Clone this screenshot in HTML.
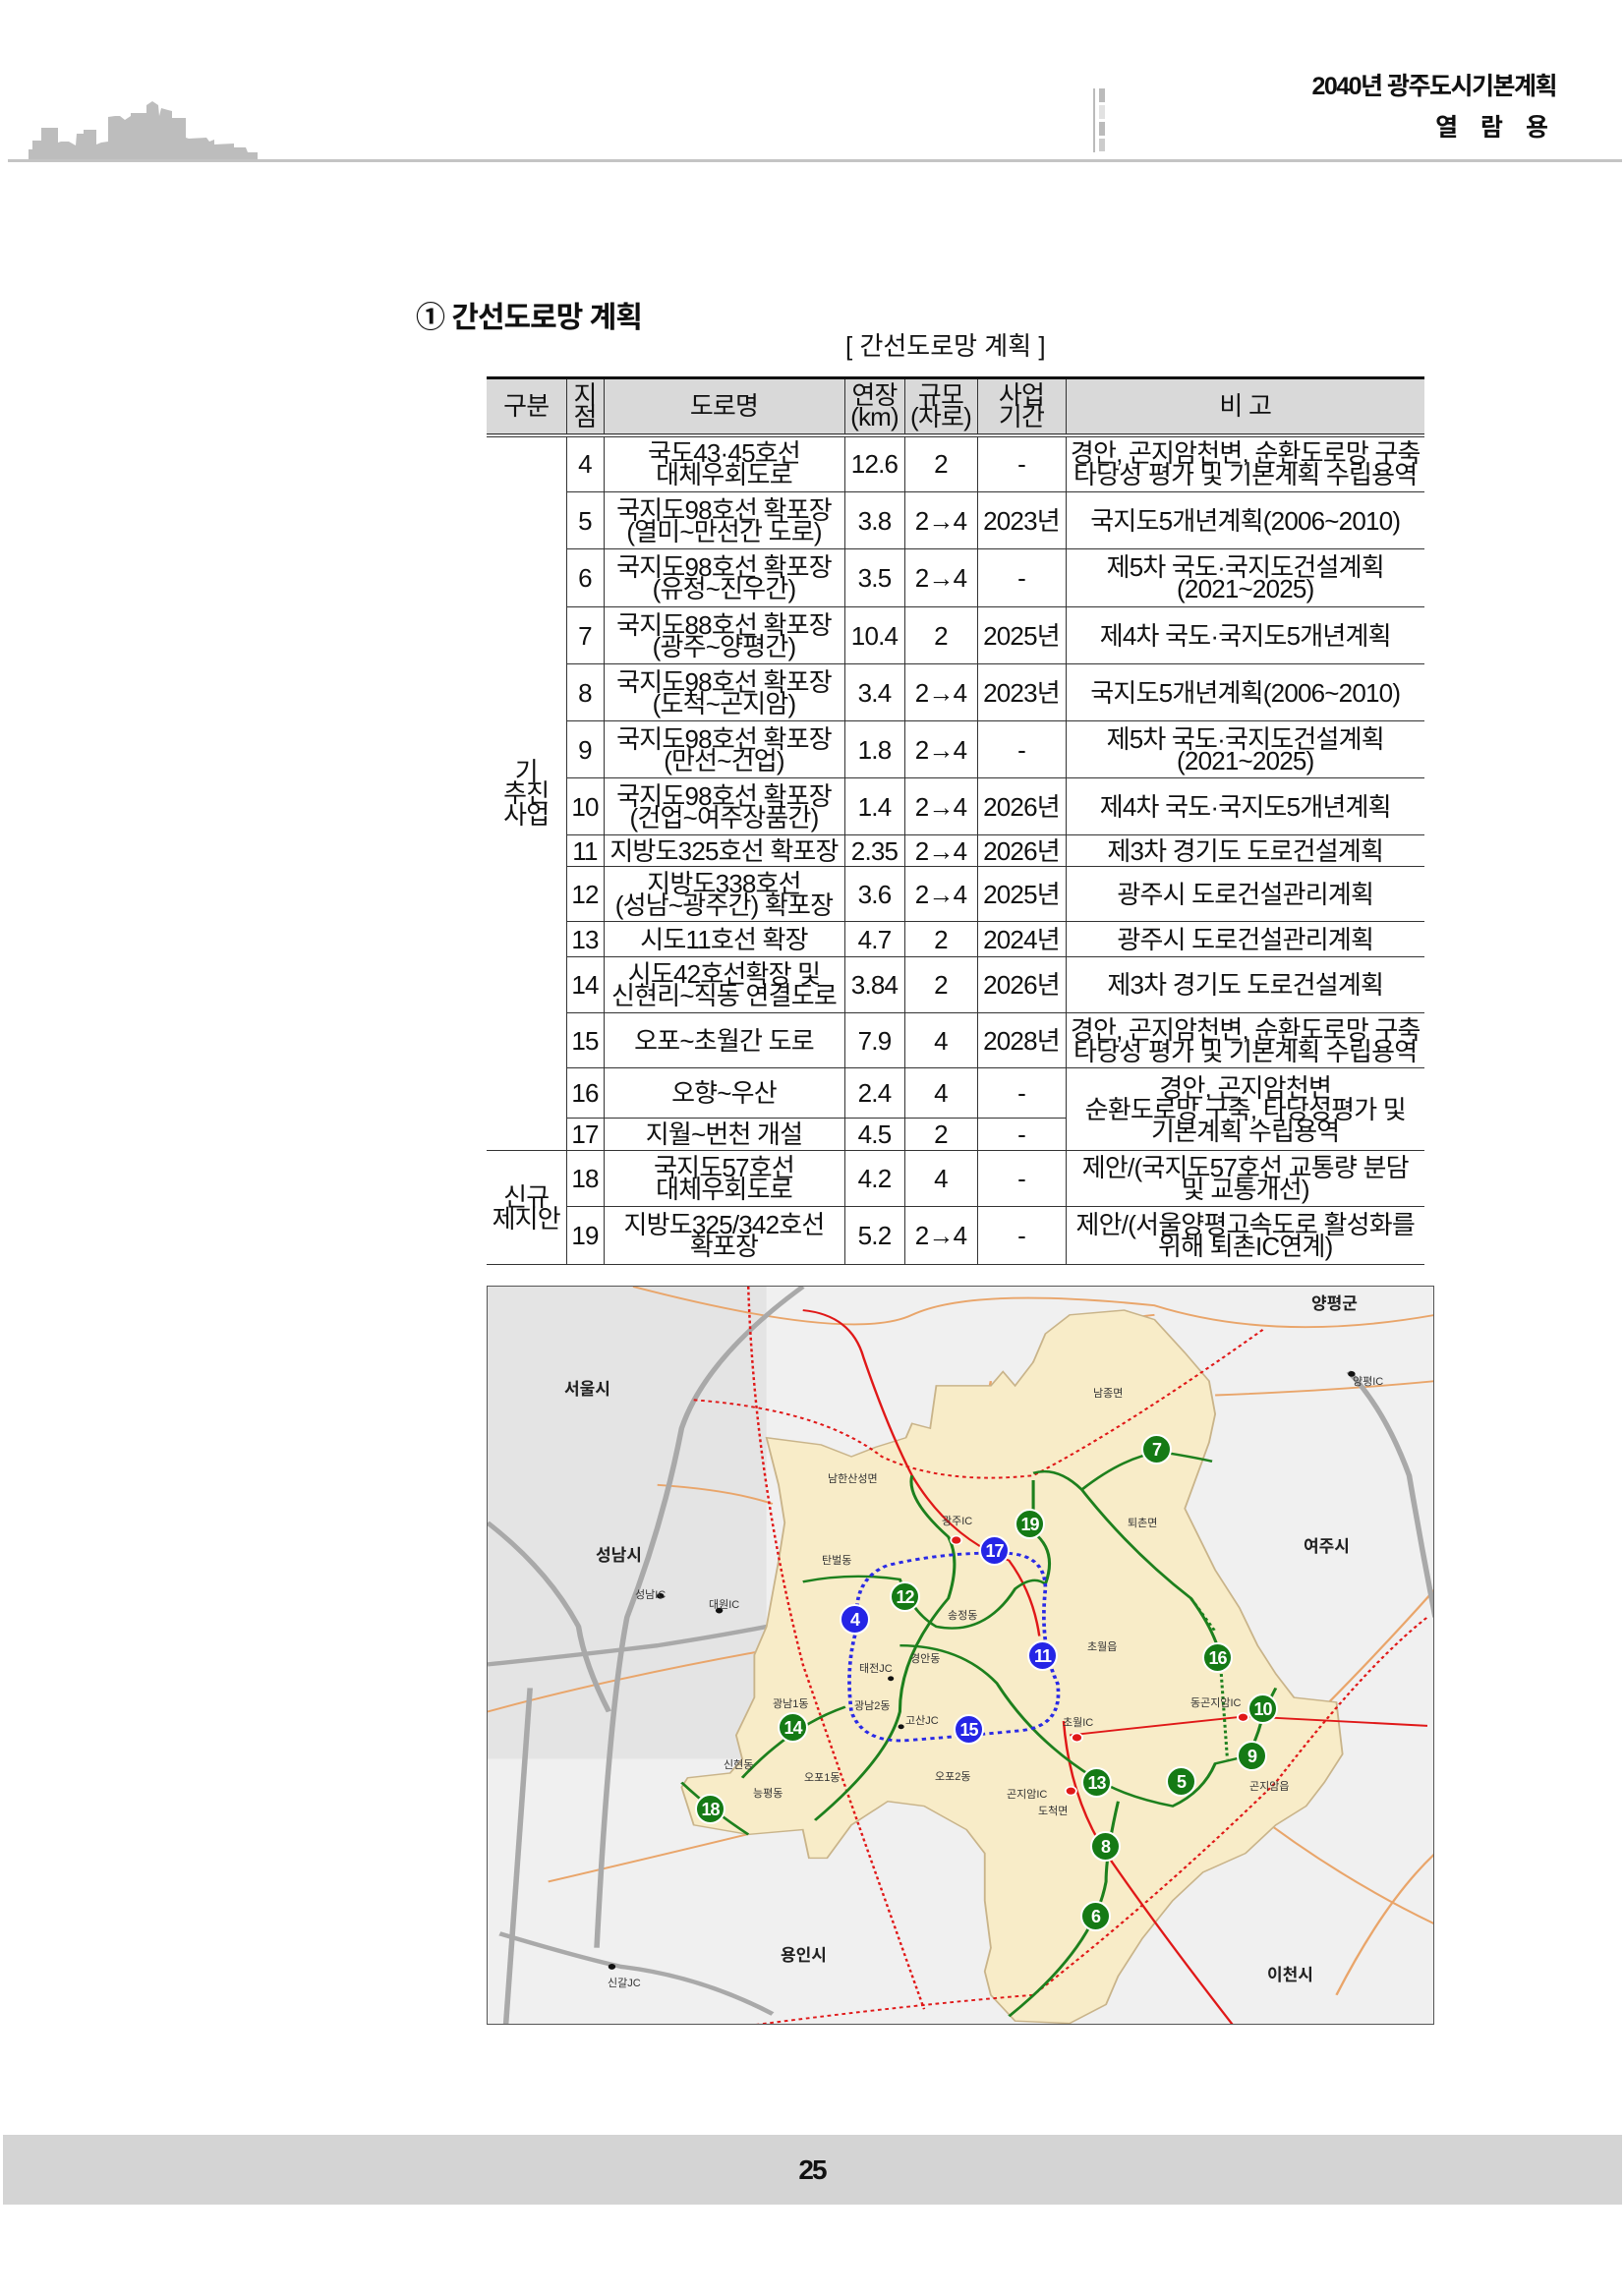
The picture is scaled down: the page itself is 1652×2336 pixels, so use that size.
<!DOCTYPE html>
<html><head><meta charset="utf-8">
<style>
*{margin:0;padding:0;box-sizing:border-box}
body{width:1652px;height:2336px;position:relative;background:#fff;font-family:"Liberation Sans","Noto Sans CJK KR",sans-serif;color:#111;overflow:hidden}
.a{position:absolute}
table{position:absolute;left:495px;top:383px;border-collapse:collapse;table-layout:fixed;width:954px;font-size:26px;letter-spacing:-0.8px}
td{border:1.5px solid #333;text-align:center;vertical-align:middle;line-height:22px;padding:0;overflow:visible;white-space:nowrap}
tr.h td{background:#d9d9d9;border-top:3px solid #111;border-bottom:4px double #333}
td.g{border-left:none;border-top:none;border-bottom:none}
td.last{border-right:none}
.c{position:absolute;width:31px;height:31px;border-radius:50%;color:#fff;font-weight:bold;font-size:18px;line-height:28px;text-align:center;letter-spacing:-1px;font-family:"Liberation Sans",sans-serif}
.gr{background:#157a15;border:2px solid #fff}
.bl{background:#2525e6;border:2px solid #fff}
.t{position:absolute;font-size:17px;color:#222;white-space:nowrap;font-weight:bold}
.s{position:absolute;font-size:11px;color:#333;white-space:nowrap}
</style></head><body>
<svg class="a" style="left:0;top:0" width="1652" height="175">
<polygon fill="#bdbdbd" points="29,165 29,152 33,152 33,143 42,143 42,130 59,130 59,145 62,144 70,144 77,148 78,136 85,136 85,132 98,132 98,147 103,145 110,144 110,119 117,118 122,118 127,122 133,118 133,115 149,115 149,107 155,103 161,107 162,118 164,110 171,112 175,113 175,120 189,120 189,140 192,141 210,140 213,144 218,142 218,147 238,146 238,150 250,150 252,155 262,155 262,165"/>
<rect x="8" y="162" width="1642" height="3" fill="#c4c4c4"/>
<rect x="1112" y="90" width="2" height="65" fill="#bbb"/>
<rect x="1118" y="90" width="6" height="14" fill="#bbb"/><rect x="1118" y="107" width="6" height="14" fill="#e2e2e2"/><rect x="1118" y="124" width="6" height="14" fill="#bbb"/><rect x="1118" y="141" width="6" height="13" fill="#ccc"/>
</svg>
<div class="a" style="right:69px;top:68px;font-size:25px;letter-spacing:-1.5px;font-weight:bold">2040년 광주도시기본계획</div>
<div class="a" style="right:69px;top:110px;font-size:25px;font-weight:bold;letter-spacing:8px">열 람 용</div>

<div class="a" style="left:423px;top:298px;font-size:30px;font-weight:bold;letter-spacing:-1px">① 간선도로망 계획</div>
<div class="a" style="left:860px;top:332px;font-size:26px;letter-spacing:0px">[ 간선도로망 계획 ]</div>

<table>
<colgroup><col style="width:81px"><col style="width:38px"><col style="width:245px"><col style="width:61px"><col style="width:74px"><col style="width:90px"><col style="width:365px"></colgroup>
<tr class="h" style="height:58px"><td style="border-left:none">구분</td><td>지<br>점</td><td>도로명</td><td>연장<br>(km)</td><td>규모<br>(차로)</td><td>사업<br>기간</td><td class="last">비 고</td></tr>
<tr style="height:58px"><td class="g" rowspan="14">기<br>추진<br>사업</td><td>4</td><td>국도43·45호선<br>대체우회도로</td><td>12.6</td><td>2</td><td>-</td><td class="last">경안, 곤지암천변, 순환도로망 구축<br>타당성 평가 및 기본계획 수립용역</td></tr>
<tr style="height:58px"><td>5</td><td>국지도98호선 확포장<br>(열미~만선간 도로)</td><td>3.8</td><td>2→4</td><td>2023년</td><td class="last">국지도5개년계획(2006~2010)</td></tr>
<tr style="height:59px"><td>6</td><td>국지도98호선 확포장<br>(유정~진우간)</td><td>3.5</td><td>2→4</td><td>-</td><td class="last">제5차 국도·국지도건설계획<br>(2021~2025)</td></tr>
<tr style="height:58px"><td>7</td><td>국지도88호선 확포장<br>(광주~양평간)</td><td>10.4</td><td>2</td><td>2025년</td><td class="last">제4차 국도·국지도5개년계획</td></tr>
<tr style="height:58px"><td>8</td><td>국지도98호선 확포장<br>(도척~곤지암)</td><td>3.4</td><td>2→4</td><td>2023년</td><td class="last">국지도5개년계획(2006~2010)</td></tr>
<tr style="height:58px"><td>9</td><td>국지도98호선 확포장<br>(만선~건업)</td><td>1.8</td><td>2→4</td><td>-</td><td class="last">제5차 국도·국지도건설계획<br>(2021~2025)</td></tr>
<tr style="height:58px"><td>10</td><td>국지도98호선 확포장<br>(건업~여주상품간)</td><td>1.4</td><td>2→4</td><td>2026년</td><td class="last">제4차 국도·국지도5개년계획</td></tr>
<tr style="height:32px"><td>11</td><td>지방도325호선 확포장</td><td>2.35</td><td>2→4</td><td>2026년</td><td class="last">제3차 경기도 도로건설계획</td></tr>
<tr style="height:56px"><td>12</td><td>지방도338호선<br>(성남~광주간) 확포장</td><td>3.6</td><td>2→4</td><td>2025년</td><td class="last">광주시 도로건설관리계획</td></tr>
<tr style="height:36px"><td>13</td><td>시도11호선 확장</td><td>4.7</td><td>2</td><td>2024년</td><td class="last">광주시 도로건설관리계획</td></tr>
<tr style="height:57px"><td>14</td><td>시도42호선확장 및<br>신현리~직동 연결도로</td><td>3.84</td><td>2</td><td>2026년</td><td class="last">제3차 경기도 도로건설계획</td></tr>
<tr style="height:56px"><td>15</td><td>오포~초월간 도로</td><td>7.9</td><td>4</td><td>2028년</td><td class="last">경안, 곤지암천변, 순환도로망 구축<br>타당성 평가 및 기본계획 수립용역</td></tr>
<tr style="height:51px"><td>16</td><td>오향~우산</td><td>2.4</td><td>4</td><td>-</td><td class="last" rowspan="2">경안, 곤지암천변<br>순환도로망 구축, 타당성평가 및<br>기본계획 수립용역</td></tr>
<tr style="height:33px"><td>17</td><td>지월~번천 개설</td><td>4.5</td><td>2</td><td>-</td></tr>
<tr style="height:57px"><td class="g" rowspan="2" style="border-top:1.5px solid #333;border-bottom:1.5px solid #333">신규<br>제지안</td><td>18</td><td>국지도57호선<br>대체우회도로</td><td>4.2</td><td>4</td><td>-</td><td class="last">제안/(국지도57호선 교통량 분담<br>및 교통개선)</td></tr>
<tr style="height:59px"><td>19</td><td>지방도325/342호선<br>확포장</td><td>5.2</td><td>2→4</td><td>-</td><td class="last">제안/(서울양평고속도로 활성화를<br>위해 퇴촌IC연계)</td></tr>
</table>

<div class="a" style="left:495px;top:1308px;width:964px;height:752px;border:1.5px solid #555;overflow:hidden;background:#eeeeee">
<svg width="964" height="752" viewBox="0 0 1563 1565" preserveAspectRatio="none" style="position:absolute;left:0;top:0">
<rect width="1563" height="1565" fill="#f0f0f0"/>
<rect x="0" y="0" width="460" height="1000" fill="#e4e4e4"/>
<g fill="none" stroke="#e9a56a" stroke-width="4">
<path d="M240 0 Q600 120 700 60 T1100 40 Q1300 120 1563 60"/>
<path d="M280 420 Q400 430 470 460"/>
<path d="M0 900 Q200 830 460 770 Q700 800 900 900 Q1100 990 1250 1100 Q1400 1250 1563 1350"/>
<path d="M100 1260 Q300 1200 460 1150 Q560 1120 620 1110"/>
<path d="M1200 230 Q1400 220 1563 200"/>
<path d="M1380 890 Q1480 760 1563 640"/>
<path d="M900 160 Q950 80 1100 60"/>
<path d="M830 200 Q800 400 760 600"/>
<path d="M1400 1500 Q1480 1300 1563 1200"/>
</g>
<g fill="none" stroke="#a9a9a9" stroke-width="9">
<path d="M520 0 Q360 150 320 300 Q290 500 230 700 Q200 900 180 1400"/>
<path d="M0 800 Q150 780 280 760 Q380 740 460 720"/>
<path d="M0 500 Q100 600 150 720 Q160 800 200 900"/>
<path d="M20 1370 Q150 1420 220 1440 Q350 1460 470 1540"/>
<path d="M1420 180 Q1480 260 1520 400 Q1540 550 1563 700"/>
<path d="M70 850 Q50 1200 30 1565"/>
</g>
<polygon fill="#f8ecc8" stroke="#c9b48a" stroke-width="3" points="460,320 550,335 600,360 640,340 690,320 700,290 730,300 740,210 830,210 850,180 870,210 900,160 920,100 960,60 1050,50 1100,70 1150,140 1190,200 1200,270 1190,330 1170,400 1150,470 1200,600 1240,680 1270,760 1300,820 1330,870 1400,880 1410,990 1380,1050 1350,1100 1300,1140 1250,1200 1180,1240 1130,1300 1080,1380 1060,1420 1040,1460 1020,1520 960,1560 870,1555 830,1500 820,1450 830,1400 820,1300 820,1200 790,1150 720,1100 660,1090 600,1140 560,1210 530,1210 520,1150 430,1160 340,1140 320,1060 330,1040 400,1030 420,1000 410,950 440,870 440,780 460,720 470,650 480,580 490,500 480,420"/>
<g fill="none" stroke="#e01818" stroke-width="4">
<path d="M520 50 Q600 60 620 150 Q660 300 700 400 Q760 530 860 580 Q900 650 910 740"/>
<path d="M960 950 Q1100 930 1250 910 Q1400 920 1550 930"/>
<path d="M950 920 Q960 1080 1020 1200 Q1100 1350 1230 1565"/>
</g>
<g fill="none" stroke="#e01818" stroke-width="4" stroke-dasharray="6,6">
<path d="M340 240 Q550 260 650 360 Q750 420 900 400 Q1050 300 1280 90"/>
<path d="M430 0 Q440 400 520 800 Q600 1100 720 1530"/>
<path d="M430 1565 Q700 1520 900 1500 Q1100 1300 1300 1050 Q1450 800 1550 700"/>
</g>
<g fill="none" stroke="#1d801d" stroke-width="5">
<path d="M700 400 Q690 450 760 530 Q780 580 760 660 Q680 780 680 900 Q660 1000 540 1130"/>
<path d="M520 625 Q600 605 680 620 Q700 690 740 720 Q820 740 870 640 Q900 610 920 630 Q940 560 900 520 L900 410"/>
<path d="M900 395 Q940 380 980 430 Q1060 560 1160 660 Q1200 730 1210 790"/>
<path d="M980 430 Q1050 360 1110 350 Q1160 360 1195 370"/>
<path d="M680 760 Q780 760 840 840 Q900 960 1000 1040 Q1050 1080 1130 1100 Q1180 1070 1200 1010 L1250 995"/>
<path d="M1250 1000 Q1270 960 1280 900 L1300 850"/>
<path d="M590 890 Q500 930 420 1040"/>
<path d="M430 1160 Q370 1110 320 1050"/>
<path d="M1040 1090 Q1020 1200 1020 1260 Q1000 1400 860 1545"/>
</g>
<path d="M1210 820 L1220 1000" stroke="#1d801d" stroke-width="5" stroke-dasharray="6,6" fill="none"/>
<path d="M1160 660 L1200 730" stroke="#1d801d" stroke-width="5" stroke-dasharray="6,6" fill="none"/>
<path d="M610 720 Q600 620 660 590 Q760 560 860 565 Q920 570 920 640 Q910 760 940 840 Q950 930 880 940 Q800 950 700 960 Q620 970 600 900 Q590 800 610 720" fill="none" stroke="#2a2ae6" stroke-width="6" stroke-dasharray="7,7"/>
<g fill="#e01818" stroke="#fff" stroke-width="3"><circle cx="773" cy="537" r="9"/><circle cx="972" cy="955" r="9"/><circle cx="962" cy="1068" r="9"/><circle cx="1246" cy="912" r="9"/></g>
<g fill="#111"><circle cx="285" cy="655" r="6"/><circle cx="382" cy="686" r="6"/><circle cx="665" cy="830" r="5"/><circle cx="682" cy="932" r="5"/><circle cx="1425" cy="185" r="6"/><circle cx="205" cy="1440" r="6"/></g>
</svg>
<div class="t" style="left:78px;top:90px">서울시</div>
<div class="t" style="left:110px;top:259px">성남시</div>
<div class="t" style="left:830px;top:250px">여주시</div>
<div class="t" style="left:298px;top:666px">용인시</div>
<div class="t" style="left:793px;top:686px">이천시</div>
<div class="t" style="left:838px;top:3px">양평군</div>
<div class="s" style="left:346px;top:187px">남한산성면</div>
<div class="s" style="left:462px;top:230px">광주IC</div>
<div class="s" style="left:616px;top:100px">남종면</div>
<div class="s" style="left:651px;top:232px">퇴촌면</div>
<div class="s" style="left:610px;top:358px">초월읍</div>
<div class="s" style="left:775px;top:500px">곤지암읍</div>
<div class="s" style="left:560px;top:525px">도척면</div>
<div class="s" style="left:528px;top:508px">곤지암IC</div>
<div class="s" style="left:585px;top:435px">초월IC</div>
<div class="s" style="left:715px;top:415px">동곤지암IC</div>
<div class="s" style="left:150px;top:305px">성남IC</div>
<div class="s" style="left:225px;top:315px">대원IC</div>
<div class="s" style="left:468px;top:326px">송정동</div>
<div class="s" style="left:430px;top:370px">경안동</div>
<div class="s" style="left:378px;top:380px">태전JC</div>
<div class="s" style="left:290px;top:416px">광남1동</div>
<div class="s" style="left:373px;top:418px">광남2동</div>
<div class="s" style="left:425px;top:433px">고산JC</div>
<div class="s" style="left:240px;top:478px">신현동</div>
<div class="s" style="left:322px;top:491px">오포1동</div>
<div class="s" style="left:455px;top:490px">오포2동</div>
<div class="s" style="left:270px;top:507px">능평동</div>
<div class="s" style="left:340px;top:270px">탄벌동</div>
<div class="s" style="left:122px;top:700px">신갈JC</div>
<div class="s" style="left:880px;top:88px">양평IC</div>
</div>

<div class="c gr" style="left:1161px;top:1459px">7</div>
<div class="c gr" style="left:1032px;top:1535px">19</div>
<div class="c bl" style="left:996px;top:1562px">17</div>
<div class="c gr" style="left:905px;top:1609px">12</div>
<div class="c bl" style="left:854px;top:1632px">4</div>
<div class="c bl" style="left:1045px;top:1669px">11</div>
<div class="c gr" style="left:1223px;top:1671px">16</div>
<div class="c gr" style="left:1269px;top:1723px">10</div>
<div class="c gr" style="left:1258px;top:1771px">9</div>
<div class="c gr" style="left:791px;top:1742px">14</div>
<div class="c bl" style="left:970px;top:1744px">15</div>
<div class="c gr" style="left:1100px;top:1798px">13</div>
<div class="c gr" style="left:1186px;top:1797px">5</div>
<div class="c gr" style="left:707px;top:1825px">18</div>
<div class="c gr" style="left:1109px;top:1863px">8</div>
<div class="c gr" style="left:1099px;top:1934px">6</div>

<div class="a" style="left:3px;top:2172px;width:1647px;height:71px;background:#d4d4d4"></div>
<div class="a" style="left:0;width:1652px;top:2192px;text-align:center;font-size:28px;font-weight:bold;letter-spacing:-2px">25</div>
</body></html>
